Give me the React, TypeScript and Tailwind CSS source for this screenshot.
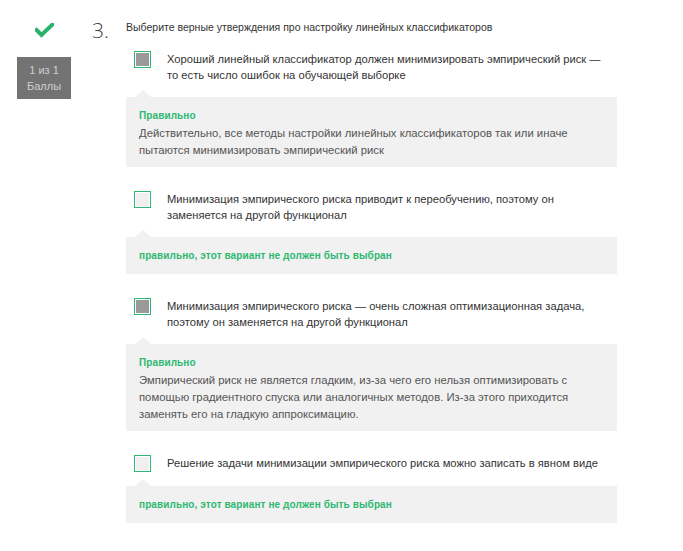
import React from "react";

const font = { fontFamily: '"Liberation Sans", Arial, sans-serif' };

type Item = {
  text: string;
  checked: boolean;
  title: string;
  body?: string;
};

const items: Item[] = [
  {
    text: "Хороший линейный классификатор должен минимизировать эмпирический риск — то есть число ошибок на обучающей выборке",
    checked: true,
    title: "Правильно",
    body: "Действительно, все методы настройки линейных классификаторов так или иначе пытаются минимизировать эмпирический риск",
  },
  {
    text: "Минимизация эмпирического риска приводит к переобучению, поэтому он заменяется на другой функционал",
    checked: false,
    title: "правильно, этот вариант не должен быть выбран",
  },
  {
    text: "Минимизация эмпирического риска — очень сложная оптимизационная задача, поэтому он заменяется на другой функционал",
    checked: true,
    title: "Правильно",
    body: "Эмпирический риск не является гладким, из-за чего его нельзя оптимизировать с помощью градиентного спуска или аналогичных методов. Из-за этого приходится заменять его на гладкую аппроксимацию.",
  },
  {
    text: "Решение задачи минимизации эмпирического риска можно записать в явном виде",
    checked: false,
    title: "правильно, этот вариант не должен быть выбран",
  },
];

function Checkbox({ checked }: { checked: boolean }) {
  return (
    <div className="w-[17px] h-[17px] shrink-0 border border-[#2cb872] bg-white p-[1px]">
      <div className={checked ? "w-full h-full bg-[#9a9a9a]" : "w-full h-full bg-[#f0f0f0]"} />
    </div>
  );
}

export default function App() {
  return (
    <div className="w-[683px] h-[551px] bg-white flex pl-[17px] pt-[19px]" style={font}>
      <div className="w-[54px] flex flex-col items-center shrink-0">
        <svg width="19" height="15" viewBox="0 0 19 15" className="mt-[4px]">
          <polyline points="1.5,7 6.5,12 17.5,1.5" fill="none" stroke="#27b36c" strokeWidth="4" strokeLinecap="square" />
        </svg>
        <div className="mt-[19px] w-[54px] h-[42px] bg-[#737373] text-[#cfcfcf] text-[11px] leading-[16px] pt-[5px] flex flex-col items-center">
          <span>1 из 1</span>
          <span>Баллы</span>
        </div>
      </div>
      <div
        className="ml-[21px] w-[34px] shrink-0 text-[21px] leading-none font-light text-[#444] mt-[1px]"
        style={{ fontFamily: '"Open Sans", sans-serif' }}
      >
        3.
      </div>
      <div className="w-[491px] shrink-0">
        <div className="text-[10.5px] leading-[16px] text-[#333]">
          Выберите верные утверждения про настройку линейных классификаторов
        </div>
        <div className="mt-[16px] flex flex-col">
          {items.map((it, i) => (
            <div key={i} className={i === 0 ? "" : "mt-[24px]"}>
              <div className="flex pl-[8px]">
                <Checkbox checked={it.checked} />
                <div className="ml-[16px] w-[438px] text-[11.2px] leading-[16px] text-[#333]">{it.text}</div>
              </div>
              <div
                className={
                  it.body
                    ? "relative mt-[14px] bg-[#f1f1f1] px-[13px] pt-[10px] pb-[8px]"
                    : "relative mt-[14px] bg-[#f1f1f1] px-[13px] pt-[10px] pb-[9px]"
                }
              >
                <div className="absolute left-[9px] top-[-7px] w-0 h-0 border-l-[8px] border-r-[8px] border-b-[7px] border-l-transparent border-r-transparent border-b-[#f1f1f1]" />
                <div className="text-[10px] leading-[18px] font-bold text-[#2db872] tracking-[0.1px]">{it.title}</div>
                {it.body && <div className="w-[440px] text-[11.3px] leading-[17px] text-[#555]">{it.body}</div>}
              </div>
            </div>
          ))}
        </div>
      </div>
    </div>
  );
}
